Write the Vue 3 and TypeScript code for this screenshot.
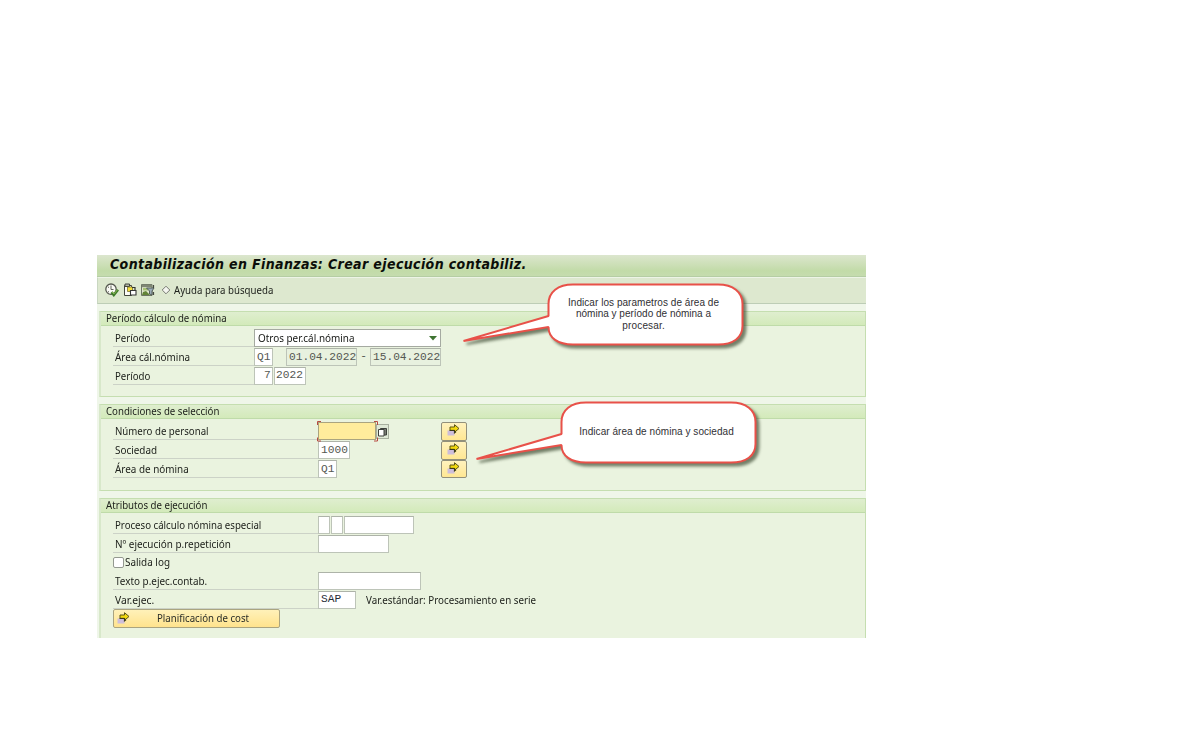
<script setup lang="ts">
interface Callout {
  id: string
  shape: string
  lines: { text: string; x: number; y: number; width: number }[]
}

const periodRows = ['Período', 'Área cál.nómina', 'Período']

const callouts: Callout[] = [
  {
    id: 'params',
    shape:
      'M476 29.5 H621 C636 29.5 645.5 37 645.5 49 V71 C645.5 83 636 89.5 621 89.5 H476 C461 89.5 451.5 83 451.5 72 L366.5 86 L451.5 61 V49 C451.5 37 461 29.5 476 29.5 Z',
    lines: [
      { text: 'Indicar los parametros de área de', x: 546.5, y: 50.5, width: 151 },
      { text: 'nómina y período de nómina a', x: 546.5, y: 62, width: 135 },
      { text: 'procesar.', x: 546.5, y: 73.5, width: 42.5 },
    ],
  },
  {
    id: 'area',
    shape:
      'M489 147.5 H634 C649 147.5 658.5 155 658.5 167 V189 C658.5 201 649 207.5 634 207.5 H489 C474 207.5 464.5 201 464.5 190 L379.5 204 L464.5 179 V167 C464.5 155 474 147.5 489 147.5 Z',
    lines: [{ text: 'Indicar área de nómina y sociedad', x: 559.5, y: 180, width: 154.5 }],
  },
]
</script>

<template>
  <main class="page">
    <svg class="defs" width="0" height="0">
      <symbol id="arrow" viewBox="0 0 13 12">
        <path d="M.5 6.500h7v5h-7z" fill="#cdbddb" />
        <path d="M3 3h4.500V.7l4.500 3.800-4.500 3.800V6.300H3z" fill="#f2d90f" stroke="#5b5415" stroke-width="1" />
        <path d="M2.500 6.500h5v2.300l1.500-1" fill="none" stroke="#3c3b18" stroke-width="1.200" />
      </symbol>
    </svg>
    <section class="window">
      <h1 class="title">Contabilización en Finanzas: Crear ejecución contabiliz.</h1>
      <div class="toolbar">
        <svg class="tool" viewBox="0 0 14 14">
          <circle cx="6" cy="6.200" r="5.200" fill="#fafaf5" stroke="#55584f" stroke-width="1.300" />
          <path d="M6 2.500v4h2.500M3 4l1 .5M3 9l1-.5" stroke="#606459" fill="none" />
          <path d="M6.500 9.200l2.300 2.800L13 6.700" stroke="#3e7b29" stroke-width="2.600" fill="none" />
          <path d="M7 9l2 1.900L12.500 6.700" stroke="#92bd58" stroke-width=".9" fill="none" />
        </svg>
        <svg class="tool" viewBox="0 0 14 14">
          <path d="M1.500 2.500h7v10h-7z" fill="#fbfbf6" stroke="#43463e" />
          <path d="M2 1h4.500v2.500H2z" fill="#b5b8a6" stroke="#43463e" />
          <path d="M4.500 4h5v4.500h-5z" fill="#f5df37" stroke="#777031" stroke-width=".8" />
          <path d="M7.500 7.500H13V12H7.500z" fill="#fff" stroke="#353735" stroke-width="1.100" />
          <path d="M9 4.500h3V7" stroke="#34372f" fill="none" stroke-width="1.200" />
        </svg>
        <svg class="tool" viewBox="0 0 14 14">
          <path d="M.5 1.500h10.500v11H.5z" fill="#e0e6cf" stroke="#6d7564" />
          <path d="M1 1.500h10v2.700H1z" fill="#7f8774" />
          <path d="M2 5h5v2.500H2z" fill="#a6c273" />
          <path d="M1 12l1-3 3-1 4 4z" fill="#638438" />
          <path d="M5.500 5h7.500L11 8v4l-2.500-1V8z" fill="#9cadb8" stroke="#4d5752" stroke-width=".9" />
          <path d="M12.500 2v3M12.500 9v3" stroke="#44483f" stroke-width="1.200" />
        </svg>
        <svg class="diamond" viewBox="0 0 10 10"><path d="M5 1.200L8.800 5 5 8.800 1.200 5z" fill="#f4f5ef" stroke="#777a73" /></svg>
        <span class="t help">Ayuda para búsqueda</span>
      </div>

      <section class="group period">
        <h2><span class="t">Período cálculo de nómina</span></h2>
        <div class="rows">
          <div v-for="(label, i) in periodRows" :key="i" class="row">
            <label><span class="t" :class="{ wide: i === 1 }">{{ label }}</span></label>
            <template v-if="i === 0">
              <div class="field select"><span class="t wide">Otros per.cál.nómina</span><svg viewBox="0 0 8 5"><path d="M0 0h8L4 4.500z" fill="#3f7432" /></svg></div>
            </template>
            <template v-else-if="i === 1">
              <div class="field mono code">Q1</div>
              <div class="field mono date from">01.04.2022</div>
              <span class="mono dash">-</span>
              <div class="field mono date">15.04.2022</div>
            </template>
            <template v-else>
              <div class="field mono number">7</div>
              <div class="field mono year">2022</div>
            </template>
          </div>
        </div>
      </section>

      <section class="group selection">
        <h2><span class="t">Condiciones de selección</span></h2>
        <div class="rows">
          <div class="row">
            <label><span class="t">Número de personal</span></label>
            <div class="field focus">
              <svg viewBox="0 0 61 21"><path d="M.5 4V.5H4M57 .5h3.500V4M.5 16.500v3.500H4M57 20h3.500V16.500" fill="none" stroke="#b84b42" /></svg>
            </div>
            <button class="match" aria-label="Ayuda"><svg viewBox="0 0 11 12"><path d="M3.500 2.500h6v6.500h-6z" fill="#777b73" stroke="#3e413c" /><path d="M1.500 3.500h5.500v6.500h-5.500z" fill="#fff" stroke="#3e413c" /></svg></button>
            <button class="multi first"><svg><use href="#arrow" /></svg></button>
          </div>
          <div class="row">
            <label><span class="t wide">Sociedad</span></label><div class="field mono company">1000</div>
            <button class="multi second"><svg><use href="#arrow" /></svg></button>
          </div>
          <div class="row">
            <label><span class="t wide">Área de nómina</span></label><div class="field mono code">Q1</div>
            <button class="multi third"><svg><use href="#arrow" /></svg></button>
          </div>
        </div>
      </section>

      <section class="group attributes">
        <h2><span class="t">Atributos de ejecución</span></h2>
        <div class="rows">
          <div class="row"><label><span class="t">Proceso cálculo nómina especial</span></label><div class="field tiny"></div><div class="field tiny"></div><div class="field process"></div></div>
          <div class="row"><label><span class="t wide">Nº ejecución p.repetición</span></label><div class="field repeat"></div></div>
          <div class="row check"><i></i><span class="t wide">Salida log</span></div>
          <div class="row"><label><span class="t wide">Texto p.ejec.contab.</span></label><div class="field note"></div></div>
          <div class="row"><label><span class="t wider">Var.ejec.</span></label><div class="field mono variant">SAP</div><span class="t description">Var.estándar: Procesamiento en serie</span></div>
          <button class="plan"><svg><use href="#arrow" /></svg><span class="t">Planificación de cost</span></button>
        </div>
      </section>

      <svg class="callouts" viewBox="0 0 769 383">
        <g v-for="item in callouts" :key="item.id">
          <path :d="item.shape" class="bubble" />
          <text v-for="line in item.lines" :key="line.text" :x="line.x" :y="line.y" :textLength="line.width">{{ line.text }}</text>
        </g>
      </svg>
    </section>
  </main>
</template>

<style>
body { margin: 0; background: #fff; }
</style>

<style scoped>
* { box-sizing: border-box; }
.page { width: 1200px; height: 750px; padding: 255px 0 0 97px; background: #fff; overflow: hidden; }
.defs { position: absolute; }
.window { position: relative; width: 769px; height: 383px; background: #eff6e9; font: 10.600px/13px "Noto Sans", sans-serif; color: #20231e; overflow: hidden; }
/* The interface typeface is slightly condensed. */
.t { display: inline-block; transform: scaleX(.912); transform-origin: left center; white-space: nowrap; }
.t.wide { transform: scaleX(.935); }
.t.wider { transform: scaleX(.975); }
.title { height: 22px; margin: 0; padding-left: 13px; border-bottom: 1px solid #b5cda4; background: linear-gradient(#dce6ce, #c2dba8 75%, #c5dcae); font: italic bold 14px/19px "DejaVu Sans Condensed", "DejaVu Sans", sans-serif; font-stretch: condensed; letter-spacing: .38px; color: #0b0e09; white-space: nowrap; }
.toolbar { display: flex; align-items: center; height: 27px; padding: 0 0 1px 7px; border-top: 1px solid #edf4e6; border-bottom: 1px solid #bdcdb6; border-left: 1px solid #c9d7c1; background: #dde8cf; }
.tool { width: 14px; height: 14px; margin-right: 4px; }
.diamond { width: 10px; height: 10px; margin-left: 2px; }
.help { margin-left: 3px; }
.group { margin: 0 0 0 2px; border: 1px solid #c5deb0; border-left: 2px solid #d8e8ca; background: #eaf3df; }
.group h2 { height: 14px; margin: 0; padding-left: 5px; border-bottom: 1px solid #bfdba9; background: linear-gradient(#dfeecf, #d3eaba); font: inherit; line-height: 13px; }
.period { height: 86px; margin-top: 7px; }
.selection { height: 87px; margin-top: 7px; }
.attributes { height: 145px; margin-top: 7px; border-bottom: 0; }
.rows { padding: 3px 0 0 12px; }
.row { display: flex; height: 18.800px; align-items: flex-start; white-space: nowrap; }
.attributes .row { height: 18.700px; }
label { flex: none; width: 205px; height: 18px; padding: 3px 0 0 2px; border-bottom: 1px solid #ccd2c7; }
.period label { width: 141px; }
.field { flex: none; height: 18px; border: 1px solid #bdc4b8; border-top-color: #adb3a8; background: #fff; }
.mono { font: 11.200px/17px "Liberation Mono", monospace; color: #555852; }
.select { display: flex; align-items: center; justify-content: space-between; width: 187px; padding: 0 3px 0 3px; border-color: #a5aaa1; color: #151714; }
.select svg { width: 8px; height: 5px; }
.code { width: 19px; padding-left: 2px; }
.date { width: 71px; padding-left: 2px; background: #e8f1df; }
.from { margin-left: 13px; }
.dash { width: 13px; text-align: center; }
.number { width: 19px; padding-left: 9px; line-height: 15px; }
.year { width: 32px; margin-left: 1px; padding-left: 1px; line-height: 15px; }
.focus { position: relative; width: 58px; background: #ffec9c; border-color: #aaa47f; }
.focus svg { position: absolute; left: -2px; top: -2px; width: 61px; height: 21px; }
.match { width: 13px; height: 15px; margin-top: 2px; padding: 0; border: 1px solid #a8b09f; background: #dfe9d6; }
.match svg { display: block; width: 11px; height: 12px; }
.multi { width: 26px; height: 18.800px; padding: 0; border: 1px solid #92907b; border-radius: 2px; background: linear-gradient(#fff2bd, #ffe793); }
.multi svg { display: block; width: 13px; height: 12px; margin: 1px 0 3px 5px; }
.first { margin-left: 52px; }
.second { margin-left: 91px; }
.third { margin-left: 104px; }
.company { width: 32px; padding-left: 2px; }
.tiny { width: 12px; margin-right: 1px; }
.process { width: 70px; }
.repeat { width: 71px; }
.note { width: 103px; }
.variant { width: 38px; padding-left: 2px; color: #262b34; line-height: 15px; }
.t.description { margin: 3px 0 0 10px; transform: scaleX(.924); }
.check span { padding-top: 3px; }
.check i { width: 11px; height: 11px; margin: 4px 1px 0 0; border: 1px solid #949990; border-radius: 2px; background: #fff; }
.plan { display: flex; align-items: center; width: 167px; height: 19px; padding: 0 0 1px 3px; border: 1px solid #aaa47f; border-radius: 2px; background: linear-gradient(#fff1b9, #ffe38d); font: inherit; color: #292c27; }
.plan svg { width: 13px; height: 12px; margin-right: 27px; }
.callouts { position: absolute; left: 0; top: 0; width: 769px; height: 383px; }
.bubble { fill: #fff; stroke: #e85149; stroke-width: 2; stroke-linejoin: bevel; filter: drop-shadow(3px 3px 1.500px rgba(50, 65, 40, .65)); }
.callouts text { font: 10px "Liberation Sans", sans-serif; fill: #302f34; text-anchor: middle; }
</style>
